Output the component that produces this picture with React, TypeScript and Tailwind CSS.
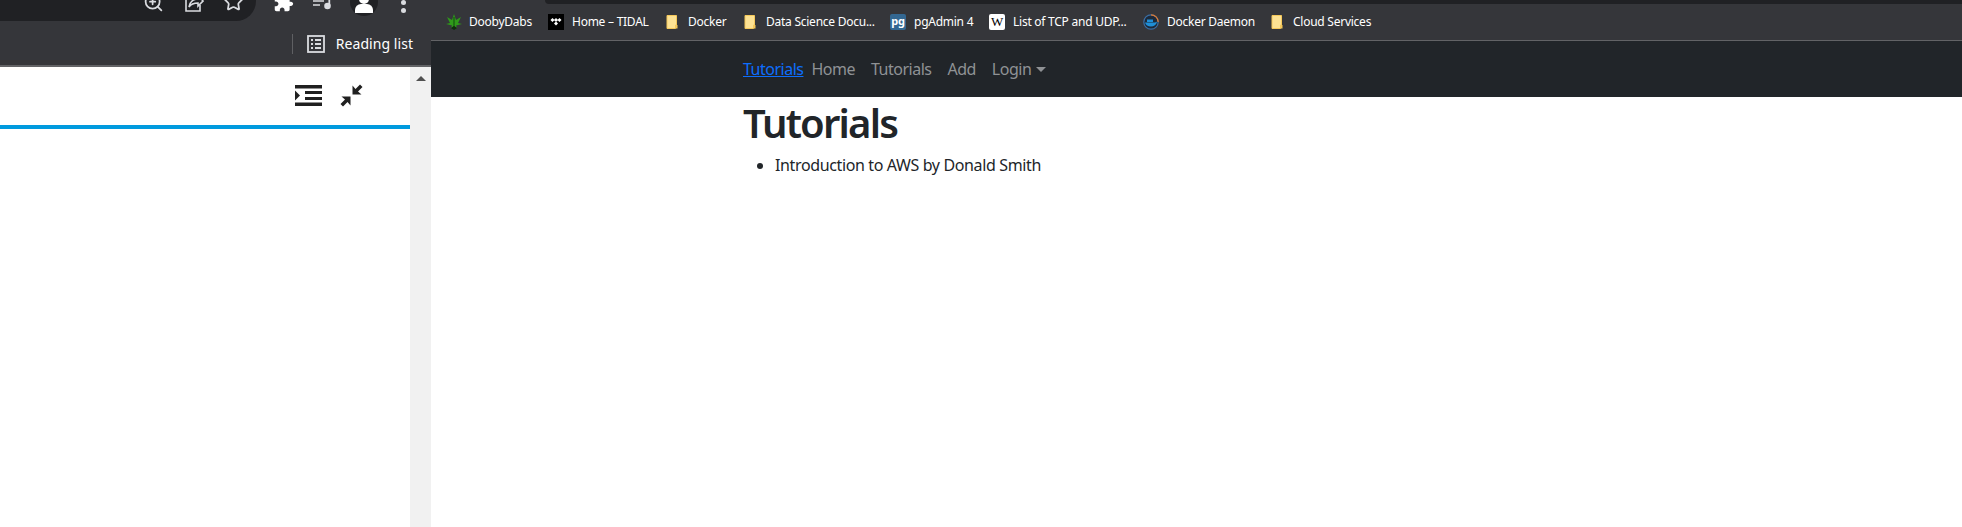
import { ZoomIn, Star } from "lucide-react";

const uiFont = "font-['Noto_Sans',sans-serif]";

function FileIcon() {
    return (
        <svg width="12" height="14" viewBox="0 0 12 14" className="shrink-0">
            <path d="M1 .5h9.500v9.500h-1v3.500H1z" fill="#fde293" stroke="#f5c85a" strokeWidth="1" />
            <path d="M9.500 10H11.500V13.500H9.500z" fill="#f5c85a" />
        </svg>
    )
}

function LeafIcon() {
    return (
        <svg width="16" height="16" viewBox="0 0 16 16" className="shrink-0">
            <path d="M8 0 10 6 15 3 12 9 16 10 10 11.500 11 14 8 12 5 14 6 11.500 0 10 4 9 1 3 6 6z" fill="#2f9a1a" />
            <path d="M8 3V15" stroke="#0f4a0c" strokeWidth="1" />
            <path d="M5 14 8 12 11 14 8 16z" fill="#0e2f0c" />
        </svg>
    )
}

function TidalIcon() {
    return (
        <svg width="16" height="16" viewBox="0 0 16 16" className="shrink-0">
            <rect width="16" height="16" fill="#000" />
            <path d="M4.500 4 6.500 6 4.500 8 2.500 6zM8 4 10 6 8 8 6 6zM11.500 4 13.500 6 11.500 8 9.500 6zM8 7.500 10 9.500 8 11.500 6 9.500z" fill="#fff" />
        </svg>
    )
}

function DockerIcon() {
    return (
        <svg width="16" height="16" viewBox="0 0 16 16" className="shrink-0">
            <circle cx="8" cy="8" r="7.200" fill="#1d2a3a" stroke="#3a6ea5" strokeWidth="1.200" />
            <path d="M8 .8A7.200 7.200 0 0 1 15.200 8" fill="none" stroke="#e0792f" strokeWidth="1.200" />
            <path d="M2 8.500h9.500c1 0 1.500-1 2.500-.8-.5 2.800-3 4.800-6 4.800-3.200 0-5.300-1.500-6-4z" fill="#1f8fd8" />
            <rect x="4" y="5.500" width="6" height="2.500" fill="#1f8fd8" />
        </svg>
    )
}

const bookmarks = [
    { label: "DoobyDabs", icon: <LeafIcon />, textClass: "w-[79px]", iconGap: "ml-[15px] mr-[7px]" },
    { label: "Home – TIDAL", icon: <TidalIcon />, textClass: "w-[94px]", iconGap: "mr-[8px]" },
    { label: "Docker", icon: <FileIcon />, textClass: "w-[56px]", iconGap: "mr-[10px]" },
    { label: "Data Science Docu...", icon: <FileIcon />, textClass: "w-[124px]", iconGap: "mr-[10px]" },
    { label: "pgAdmin 4", icon: <div className="w-4 h-4 shrink-0 rounded-[2px] bg-[#336791] text-white text-[11px] leading-[14px] font-bold text-center">pg</div>, textClass: "w-[75px]", iconGap: "mr-[8px]" },
    { label: "List of TCP and UDP...", icon: <div className="w-4 h-4 shrink-0 rounded-[2px] bg-white text-black text-[13px] leading-[16px] text-center font-['Liberation_Serif',serif]">W</div>, textClass: "w-[130px]", iconGap: "mr-[8px]" },
    { label: "Docker Daemon", icon: <DockerIcon />, textClass: "w-[104px]", iconGap: "mr-[8px]" },
    { label: "Cloud Services", icon: <FileIcon />, textClass: "", iconGap: "mr-[10px]" },
];

function LeftPane() {
    return (
        <div className="w-[431px] shrink-0 h-full flex flex-col bg-white">
            <div className="h-[22px] bg-[#35363a] flex overflow-hidden text-[#dadce0]">
                <div className="w-[256px] h-[21px] bg-[#202124] rounded-br-[20px] relative shrink-0">
                    <ZoomIn size={21} strokeWidth={2} className="absolute left-[143px] -top-[8px]" />
                    <svg width="20" height="20" viewBox="0 0 20 20" className="absolute left-[184px] -top-[8px]" fill="none" stroke="currentColor" strokeWidth="1.600">
                        <path d="M8 4H2V19H16V13" />
                        <path d="M5 15c1-5 4-8 9-8V3l5 6-5 5v-3c-4 0-7 1-9 4z" />
                    </svg>
                    <Star size={21} strokeWidth={2} className="absolute left-[223px] -top-[9px]" />
                </div>
                <div className="relative flex-1">
                    <svg width="21" height="21" viewBox="0 0 24 24" className="absolute left-[17px] -top-[8px]" fill="#fff">
                        <path d="M20.500 11H19V7c0-1.100-.9-2-2-2h-4V3.500C13 2.120 11.880 1 10.500 1S8 2.120 8 3.500V5H4c-1.100 0-1.990.9-1.990 2v3.800H3.500c1.490 0 2.700 1.210 2.700 2.700s-1.210 2.700-2.700 2.700H2V20c0 1.100.9 2 2 2h3.800v-1.500c0-1.490 1.210-2.700 2.700-2.700 1.490 0 2.700 1.210 2.700 2.700V22H17c1.100 0 2-.9 2-2v-4h1.500c1.380 0 2.500-1.120 2.500-2.500S21.880 11 20.500 11z" />
                    </svg>
                    <svg width="20" height="20" viewBox="0 0 20 20" className="absolute left-[57px] -top-[8px]" fill="none" stroke="#dadce0" strokeWidth="1.600">
                        <path d="M0 5H11M0 9H11M0 13H7" />
                        <circle cx="14.500" cy="14" r="2.500" fill="#dadce0" />
                        <path d="M16.300 14V3" strokeWidth="1.800" />
                    </svg>
                    <div className="absolute left-[94px] -top-[12px] w-[28px] h-[28px] rounded-full bg-[#202124] overflow-hidden">
                        <div className="absolute left-[9px] top-[5px] w-[10px] h-[11px] rounded-full bg-white" />
                        <div className="absolute left-[5px] top-[16px] w-[18px] h-[9px] rounded-t-[6px] bg-white" />
                    </div>
                    <div className="absolute left-[145px] top-0 w-[5px] h-[5px] rounded-full bg-[#dadce0]" />
                    <div className="absolute left-[145px] top-[8px] w-[5px] h-[5px] rounded-full bg-[#dadce0]" />
                </div>
            </div>
            <div className="h-[45px] bg-[#35363a] border-b-2 border-[#626366] flex items-center justify-end pr-[18px] text-white">
                <div className="w-px h-[20px] bg-[#5f6063] mr-[14px]" />
                <svg width="18" height="18" viewBox="0 0 18 18" className="mr-[11px]" fill="none" stroke="#dadce0" strokeWidth="1.800">
                    <rect x="1" y="1" width="16" height="16" />
                    <path d="M4 5H6M8 5H14M4 9H6M8 9H14M4 13H6M8 13H14" />
                </svg>
                <span className={`${uiFont} text-[14px] tracking-[0.05px]`}>Reading list</span>
            </div>
            <div className="flex-1 flex min-h-0">
                <div className="flex-1 flex flex-col">
                    <div className="h-[58px] flex items-center justify-end pr-[47px] pb-[2px] gap-[18px] text-[#202020]">
                        <svg width="27" height="21" viewBox="0 0 27 21" fill="currentColor">
                            <rect width="27" height="3.500" />
                            <rect y="17.500" width="27" height="3.500" />
                            <rect x="10" y="6" width="17" height="3" />
                            <rect x="10" y="12" width="17" height="3" />
                            <path d="M0 5.500 5 10.500 0 15.500z" />
                        </svg>
                        <svg width="23" height="23" viewBox="0 0 23 23" fill="currentColor">
                            <path d="M12.500 1.500V10.500H21.500L18 7.500 22.500 3 20 .5 15.500 5z" />
                            <path d="M10.500 21.500V12.500H1.500L5 15.500.5 20 3 22.500 7.500 18z" />
                        </svg>
                    </div>
                    <div className="h-[4px] bg-[#009ade]" />
                </div>
                <div className="w-[21px] bg-[#f1f1f1] flex justify-center pt-[9px]">
                    <div className="w-0 h-0 border-x-[5px] border-x-transparent border-b-[5px] border-b-[#505050]" />
                </div>
            </div>
        </div>
    )
}

function RightPane() {
    return (
        <div className={`flex-1 h-full flex flex-col bg-white ${uiFont}`}>
            <div className="h-[4px] bg-[#35363a] flex">
                <div className="w-[114px]" />
                <div className="flex-1 bg-[#202124] rounded-bl-[4px]" />
            </div>
            <div className="h-[37px] bg-[#35363a] border-b border-[#626366] flex items-center pb-px text-white text-[12px] tracking-[-0.25px]">
                {bookmarks.map((b) => (
                    <div key={b.label} className="flex items-center">
                        <div className={`flex ${b.iconGap}`}>{b.icon}</div>
                        <span className={`${b.textClass} whitespace-nowrap`}>{b.label}</span>
                    </div>
                ))}
            </div>
            <nav className="h-[56px] bg-[#212529] pl-[312px] flex items-center text-[16px] tracking-[-0.5px] text-[#8f9295]">
                <a className="text-[#0d6efd] underline mr-2">Tutorials</a>
                <span className="mr-4">Home</span>
                <span className="mr-4">Tutorials</span>
                <span className="mr-4">Add</span>
                <span>Login</span>
                <span className="ml-[5px] w-0 h-0 border-x-[5px] border-x-transparent border-t-[5px] border-t-[#8f9295]" />
            </nav>
            <main className="pl-[312px] pt-[2px] text-[#212529]">
                <h1 className="text-[40px] leading-[48px] font-semibold tracking-[-1.8px]">Tutorials</h1>
                <ul className="list-disc pl-8 mt-[6px] text-[16px] leading-6 tracking-[-0.37px]">
                    <li>Introduction to AWS by Donald Smith</li>
                </ul>
            </main>
        </div>
    )
}

export default function App() {
    return (
        <div className="w-[1962px] h-[527px] flex overflow-hidden bg-white">
            <LeftPane />
            <RightPane />
        </div>
    )
}
